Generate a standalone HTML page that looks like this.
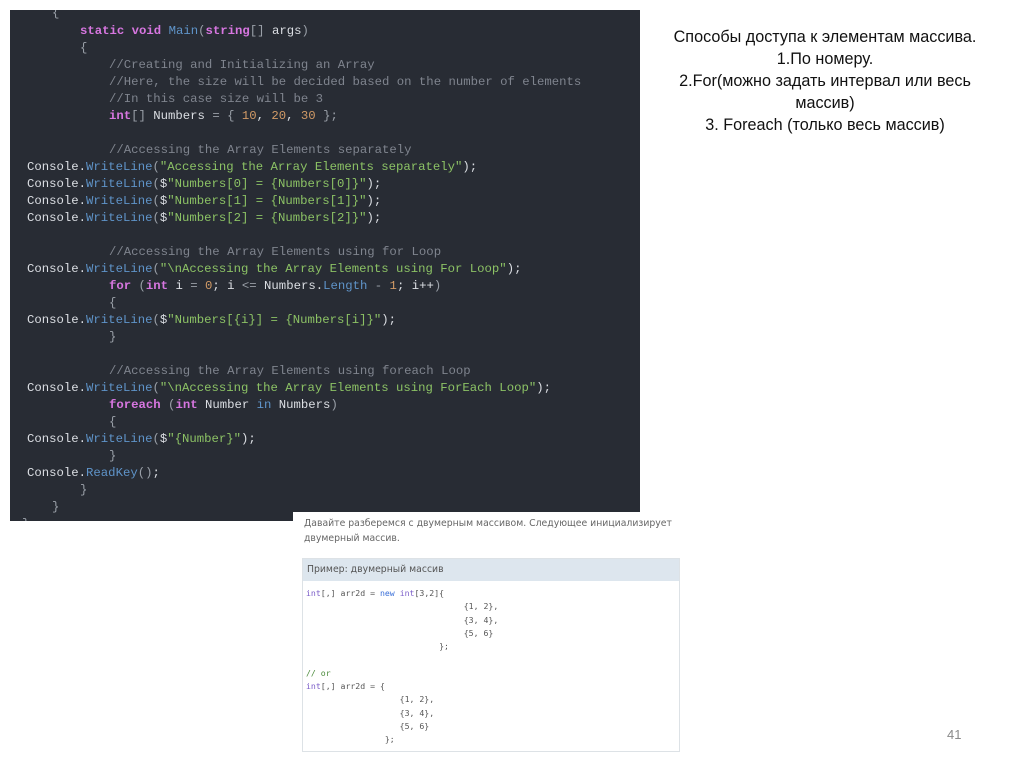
<!DOCTYPE html>
<html><head><meta charset="utf-8"><style>
body{margin:0;width:1024px;height:767px;background:#fff;position:relative;overflow:hidden;font-family:"Liberation Sans","DejaVu Sans",sans-serif}
#code{position:absolute;left:10px;top:10px;width:630px;height:511px;background:#282c34;overflow:hidden}
.l{position:absolute;white-space:pre;font-family:"Liberation Mono","DejaVu Sans Mono",monospace;font-size:12.3px;color:#dcdfe4;line-height:17px}
.k{color:#d776e0;font-weight:bold}.m{color:#5f94c9}.s{color:#8cc265}.n{color:#d19a66}.c{color:#7f848e}.p{color:#9aa0a8}
#t{position:absolute;left:658px;top:26px;width:334px;text-align:center;font-size:16.2px;line-height:22px;color:#111}
#w{position:absolute;left:293px;top:512px;width:393px;height:245px;background:#fff}
.r{font-family:"DejaVu Sans",sans-serif;font-size:9.3px;color:#666}
.cc{font-family:"DejaVu Sans Mono",monospace;font-size:8.2px;color:#555;white-space:pre;line-height:13.3px}
</style></head><body>
<div id="code">
<div class="l p" style="left:42px;top:-5px">{</div>
<div class="l" style="left:70px;top:13px"><span class="k">static</span> <span class="k">void</span> <span class="m">Main</span><span class="p">(</span><span class="k">string</span><span class="p">[]</span> args<span class="p">)</span></div>
<div class="l p" style="left:70px;top:30px">{</div>
<div class="l c" style="left:99px;top:47px">//Creating and Initializing an Array</div>
<div class="l c" style="left:99px;top:64px">//Here, the size will be decided based on the number of elements</div>
<div class="l c" style="left:99px;top:81px">//In this case size will be 3</div>
<div class="l" style="left:99px;top:98px"><span class="k">int</span><span class="p">[]</span> Numbers <span class="p">= {</span> <span class="n">10</span>, <span class="n">20</span>, <span class="n">30</span> <span class="p">};</span></div>
<div class="l c" style="left:99px;top:132px">//Accessing the Array Elements separately</div>
<div class="l" style="left:17px;top:149px">Console.<span class="m">WriteLine</span><span class="p">(</span><span class="s">"Accessing the Array Elements separately"</span>);</div>
<div class="l" style="left:17px;top:166px">Console.<span class="m">WriteLine</span><span class="p">(</span>$<span class="s">"Numbers[0] = {Numbers[0]}"</span>);</div>
<div class="l" style="left:17px;top:183px">Console.<span class="m">WriteLine</span><span class="p">(</span>$<span class="s">"Numbers[1] = {Numbers[1]}"</span>);</div>
<div class="l" style="left:17px;top:200px">Console.<span class="m">WriteLine</span><span class="p">(</span>$<span class="s">"Numbers[2] = {Numbers[2]}"</span>);</div>
<div class="l c" style="left:99px;top:234px">//Accessing the Array Elements using for Loop</div>
<div class="l" style="left:17px;top:251px">Console.<span class="m">WriteLine</span><span class="p">(</span><span class="s">"\nAccessing the Array Elements using For Loop"</span>);</div>
<div class="l" style="left:99px;top:268px"><span class="k">for</span> <span class="p">(</span><span class="k">int</span> i <span class="p">=</span> <span class="n">0</span>; i <span class="p">&lt;=</span> Numbers.<span class="m">Length</span> <span class="p">-</span> <span class="n">1</span>; i++<span class="p">)</span></div>
<div class="l p" style="left:99px;top:285px">{</div>
<div class="l" style="left:17px;top:302px">Console.<span class="m">WriteLine</span><span class="p">(</span>$<span class="s">"Numbers[{i}] = {Numbers[i]}"</span>);</div>
<div class="l p" style="left:99px;top:319px">}</div>
<div class="l c" style="left:99px;top:353px">//Accessing the Array Elements using foreach Loop</div>
<div class="l" style="left:17px;top:370px">Console.<span class="m">WriteLine</span><span class="p">(</span><span class="s">"\nAccessing the Array Elements using ForEach Loop"</span>);</div>
<div class="l" style="left:99px;top:387px"><span class="k">foreach</span> <span class="p">(</span><span class="k">int</span> Number <span class="m">in</span> Numbers<span class="p">)</span></div>
<div class="l p" style="left:99px;top:404px">{</div>
<div class="l" style="left:17px;top:421px">Console.<span class="m">WriteLine</span><span class="p">(</span>$<span class="s">"{Number}"</span>);</div>
<div class="l p" style="left:99px;top:438px">}</div>
<div class="l" style="left:17px;top:455px">Console.<span class="m">ReadKey</span><span class="p">()</span>;</div>
<div class="l p" style="left:70px;top:472px">}</div>
<div class="l p" style="left:42px;top:489px">}</div>
<div class="l p" style="left:12px;top:506px">}</div>
</div>
<div id="t">Способы доступа к элементам массива.<br>1.По номеру.<br>2.For(можно задать интервал или весь массив)<br>3. Foreach (только весь массив)</div>
<div id="w">
<div class="r" style="position:absolute;left:11px;top:4px;line-height:15px;width:385px">Давайте разберемся с двумерным массивом. Следующее инициализирует двумерный массив.</div>
<div style="position:absolute;left:9px;top:46px;width:376px;height:192px;border:1px solid #dde2e6;background:#fff"></div>
<div class="r" style="position:absolute;left:10px;top:47px;width:376px;height:22px;background:#dde6ee;line-height:22px;color:#555"><span style="padding-left:4px">Пример: двумерный массив</span></div>
<div class="cc" style="position:absolute;left:13px;top:75px"><span style="color:#7a5cc8">int</span>[,] arr2d = <span style="color:#3a6fd8">new</span> <span style="color:#7a5cc8">int</span>[3,2]{
                                {1, 2},
                                {3, 4},
                                {5, 6}
                           };

<span style="color:#4a8a3a">// or</span>
<span style="color:#7a5cc8">int</span>[,] arr2d = {
                   {1, 2},
                   {3, 4},
                   {5, 6}
                };</div>
</div>
<div style="position:absolute;left:947px;top:727px;font-size:13px;color:#8a8a8a">41</div>
</body></html>
